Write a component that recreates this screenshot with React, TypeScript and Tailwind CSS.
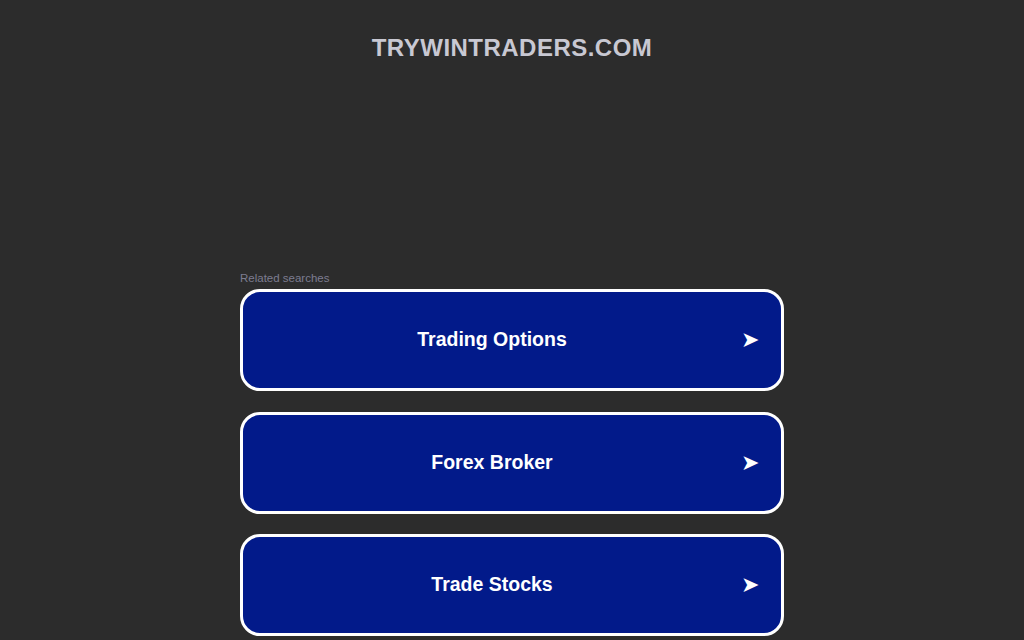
export default function App() {
  const items = ['Trading Options', 'Forex Broker', 'Trade Stocks']
  return (
    <div className="w-full bg-[#2c2c2c] flex flex-col items-center overflow-hidden" style={{ height: 640 }}>
      <h1 className="mt-[34px] text-[24px] leading-[28px] font-bold tracking-[0.02em] text-[#c8c8d2] font-['Liberation_Sans',Arial,sans-serif]">
        TRYWINTRADERS.COM
      </h1>
      <div className="mt-[209px] w-[544px] flex flex-col font-['Liberation_Sans',Arial,sans-serif]">
        <div className="text-[11.5px] leading-[14px] text-[#7c7c90] mb-[4px]">Related searches</div>
        <div className="flex flex-col gap-[20.5px]">
          {items.map((t) => (
            <div key={t} className="h-[102px] rounded-[20px] border-[3px] border-white bg-[#021a8a] flex items-center">
              <span className="flex-1 text-center text-[19.5px] font-bold text-white">{t}</span>
              <span className="w-[40px] pr-[20px] text-[22px] text-white leading-none">➤</span>
            </div>
          ))}
        </div>
      </div>
    </div>
  )
}
